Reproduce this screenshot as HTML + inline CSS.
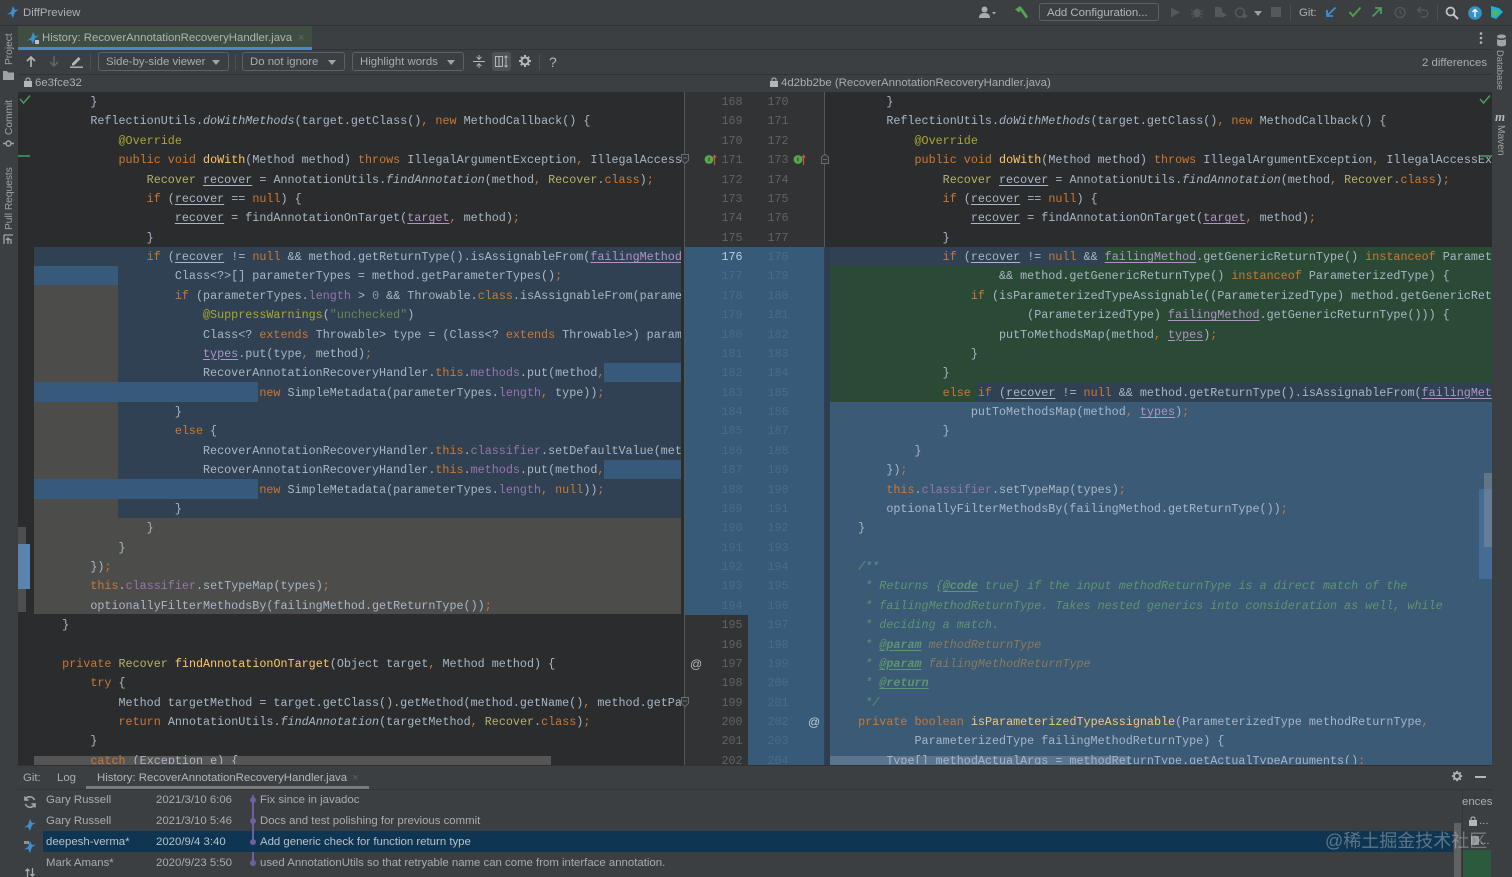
<!DOCTYPE html>
<html><head><meta charset="utf-8"><title>DiffPreview</title>
<style>
html,body{margin:0;padding:0;background:#3c3f41}
#r{position:relative;width:1512px;height:877px;overflow:hidden;background:#3c3f41;font-family:"Liberation Sans","Noto Sans CJK SC",sans-serif;font-size:11.4px;color:#a9adb0;filter:blur(.35px)}
#r div,#r svg,#r span.a{position:absolute}
.t{position:absolute;white-space:pre;line-height:14px}
pre{position:absolute;margin:0;font-family:"Liberation Mono",monospace;font-size:11.74px;line-height:19.38px;color:#a9b7c6;white-space:pre}
.p{overflow:hidden}
i{font-style:italic}
.k{color:#cc7832}.n{color:#b5b36a}.f{color:#ffc66d}.v{color:#9876aa}.u{text-decoration:underline;text-underline-offset:2px}.m{color:#b095c4}
.an{color:#a8a832}.s{color:#6a8759}.d{color:#8a9aa8}.c{color:#5f9570;font-style:italic}.b{text-decoration:underline;font-weight:bold;text-underline-offset:2px}.q{color:#8c7a5c}
.g{position:absolute;font-family:"Liberation Mono",monospace;font-size:11.7px;line-height:19.38px;color:#606366;white-space:pre;text-align:center;width:24px}
.cb{border:1px solid #5e6164;border-radius:3px;height:18px;box-sizing:border-box;line-height:18px;padding-left:7px;color:#a9adb0;white-space:pre}
.ar{width:0;height:0;border-left:4px solid transparent;border-right:4px solid transparent;border-top:5px solid #a0a3a5}
.vt{position:absolute;white-space:pre;transform-origin:0 0;font-size:10.2px;color:#a0a3a5;line-height:12px}
</style></head><body><div id="r">

<!-- editor backgrounds -->
<div style="left:18px;top:92px;width:667px;height:673px;background:#2b2c2d"></div>
<div style="left:825px;top:92px;width:667px;height:673px;background:#2b2c2d"></div>
<div style="left:685px;top:92px;width:140px;height:673px;background:#313335"></div>

<!-- left diff -->
<div style="left:34px;top:247px;width:647px;height:271px;background:#2f4152"></div>
<div style="left:34px;top:266px;width:84px;height:19px;background:#385a7a"></div>
<div style="left:34px;top:285px;width:84px;height:233px;background:#4c4c4a"></div>
<div style="left:34px;top:518px;width:647px;height:96px;background:#4c4c4a"></div>
<div style="left:604px;top:363px;width:77px;height:19px;background:#385a7a"></div>
<div style="left:34px;top:382px;width:224px;height:20px;background:#385a7a"></div>
<div style="left:604px;top:460px;width:77px;height:19px;background:#385a7a"></div>
<div style="left:34px;top:479px;width:224px;height:20px;background:#385a7a"></div>
<div style="left:681px;top:247px;width:4px;height:368px;background:#2b2c2d"></div>

<!-- gutter diff -->
<div style="left:685px;top:247px;width:140px;height:368px;background:#375a79"></div>
<div style="left:748px;top:615px;width:77px;height:150px;background:#375a79"></div>

<!-- right diff -->
<div style="left:825px;top:247px;width:5px;height:518px;background:#2c3e50"></div>
<div style="left:830px;top:247px;width:662px;height:19px;background:#2a4a35"></div>
<div style="left:830px;top:247px;width:274px;height:19px;background:#2f4152"></div>
<div style="left:830px;top:266px;width:662px;height:136px;background:#2a4a35"></div>
<div style="left:977px;top:382px;width:515px;height:20px;background:#2f4152"></div>
<div style="left:830px;top:402px;width:662px;height:363px;background:#3a5a76"></div>

<!-- horizontal scrollbars -->
<div style="left:34px;top:756px;width:517px;height:9px;background:rgba(120,120,118,.55)"></div>
<div style="left:830px;top:756px;width:300px;height:9px;background:rgba(150,165,185,.35)"></div>

<!-- code left -->
<div class="p" style="left:34px;top:92px;width:647px;height:672px"><pre style="left:0;top:1px">        }
        ReflectionUtils.<i>doWithMethods</i>(target.getClass()<span class="k">,</span> <span class="k">new</span> MethodCallback() {
            <span class="an">@Override</span>
            <span class="k">public void</span> <span class="f">doWith</span>(Method method) <span class="k">throws</span> IllegalArgumentException<span class="k">,</span> IllegalAccessException {
                <span class="n">Recover</span> <span class="u">recover</span> = AnnotationUtils.<i>findAnnotation</i>(method<span class="k">,</span> <span class="n">Recover</span>.<span class="k">class</span>)<span class="k">;</span>
                <span class="k">if</span> (<span class="u">recover</span> == <span class="k">null</span>) {
                    <span class="u">recover</span> = findAnnotationOnTarget(<span class="u m">target</span><span class="k">,</span> method)<span class="k">;</span>
                }
                <span class="k">if</span> (<span class="u">recover</span> != <span class="k">null</span> &amp;&amp; method.getReturnType().isAssignableFrom(<span class="u m">failingMethod</span>.getReturnType())) {
                    Class&lt;?&gt;[] parameterTypes = method.getParameterTypes()<span class="k">;</span>
                    <span class="k">if</span> (parameterTypes.<span class="v">length</span> &gt; <span class="d">0</span> &amp;&amp; Throwable.<span class="k">class</span>.isAssignableFrom(parameterTypes[<span class="d">0</span>])) {
                        <span class="an">@SuppressWarnings</span>(<span class="s">"unchecked"</span>)
                        Class&lt;? <span class="k">extends</span> Throwable&gt; type = (Class&lt;? <span class="k">extends</span> Throwable&gt;) parameterTypes[<span class="d">0</span>]<span class="k">;</span>
                        <span class="u m">types</span>.put(type<span class="k">,</span> method)<span class="k">;</span>
                        RecoverAnnotationRecoveryHandler.<span class="k">this</span>.<span class="v">methods</span>.put(method<span class="k">,</span>
                                <span class="k">new</span> SimpleMetadata(parameterTypes.<span class="v">length</span><span class="k">,</span> type))<span class="k">;</span>
                    }
                    <span class="k">else</span> {
                        RecoverAnnotationRecoveryHandler.<span class="k">this</span>.<span class="v">classifier</span>.setDefaultValue(method)<span class="k">;</span>
                        RecoverAnnotationRecoveryHandler.<span class="k">this</span>.<span class="v">methods</span>.put(method<span class="k">,</span>
                                <span class="k">new</span> SimpleMetadata(parameterTypes.<span class="v">length</span><span class="k">,</span> <span class="k">null</span>))<span class="k">;</span>
                    }
                }
            }
        })<span class="k">;</span>
        <span class="k">this</span>.<span class="v">classifier</span>.setTypeMap(types)<span class="k">;</span>
        optionallyFilterMethodsBy(failingMethod.getReturnType())<span class="k">;</span>
    }

    <span class="k">private</span> <span class="n">Recover</span> <span class="f">findAnnotationOnTarget</span>(Object target<span class="k">,</span> Method method) {
        <span class="k">try</span> {
            Method targetMethod = target.getClass().getMethod(method.getName()<span class="k">,</span> method.getParameterTypes())<span class="k">;</span>
            <span class="k">return</span> AnnotationUtils.<i>findAnnotation</i>(targetMethod<span class="k">,</span> <span class="n">Recover</span>.<span class="k">class</span>)<span class="k">;</span>
        }
        <span class="k">catch</span> (Exception e) {</pre></div>

<!-- code right -->
<div class="p" style="left:830px;top:92px;width:662px;height:672px"><pre style="left:0;top:1px">        }
        ReflectionUtils.<i>doWithMethods</i>(target.getClass()<span class="k">,</span> <span class="k">new</span> MethodCallback() {
            <span class="an">@Override</span>
            <span class="k">public void</span> <span class="f">doWith</span>(Method method) <span class="k">throws</span> IllegalArgumentException<span class="k">,</span> IllegalAccessException {
                <span class="n">Recover</span> <span class="u">recover</span> = AnnotationUtils.<i>findAnnotation</i>(method<span class="k">,</span> <span class="n">Recover</span>.<span class="k">class</span>)<span class="k">;</span>
                <span class="k">if</span> (<span class="u">recover</span> == <span class="k">null</span>) {
                    <span class="u">recover</span> = findAnnotationOnTarget(<span class="u m">target</span><span class="k">,</span> method)<span class="k">;</span>
                }
                <span class="k">if</span> (<span class="u">recover</span> != <span class="k">null</span> &amp;&amp; <span class="u m">failingMethod</span>.getGenericReturnType() <span class="k">instanceof</span> ParameterizedType
                        &amp;&amp; method.getGenericReturnType() <span class="k">instanceof</span> ParameterizedType) {
                    <span class="k">if</span> (isParameterizedTypeAssignable((ParameterizedType) method.getGenericReturnType()<span class="k">,</span>
                            (ParameterizedType) <span class="u m">failingMethod</span>.getGenericReturnType())) {
                        putToMethodsMap(method<span class="k">,</span> <span class="u m">types</span>)<span class="k">;</span>
                    }
                }
                <span class="k">else if</span> (<span class="u">recover</span> != <span class="k">null</span> &amp;&amp; method.getReturnType().isAssignableFrom(<span class="u m">failingMethod</span>.getReturnType())) {
                    putToMethodsMap(method<span class="k">,</span> <span class="u m">types</span>)<span class="k">;</span>
                }
            }
        })<span class="k">;</span>
        <span class="k">this</span>.<span class="v">classifier</span>.setTypeMap(types)<span class="k">;</span>
        optionallyFilterMethodsBy(failingMethod.getReturnType())<span class="k">;</span>
    }

    <span class="c">/**</span>
     <span class="c">* Returns {<span class="b">@code</span> true} if the input methodReturnType is a direct match of the</span>
     <span class="c">* failingMethodReturnType. Takes nested generics into consideration as well, while</span>
     <span class="c">* deciding a match.</span>
     <span class="c">* <span class="b">@param</span> <span class="q">methodReturnType</span></span>
     <span class="c">* <span class="b">@param</span> <span class="q">failingMethodReturnType</span></span>
     <span class="c">* <span class="b">@return</span></span>
     <span class="c">*/</span>
    <span class="k">private boolean</span> <span class="f">isParameterizedTypeAssignable</span>(ParameterizedType methodReturnType<span class="k">,</span>
            ParameterizedType failingMethodReturnType) {
        Type[] methodActualArgs = methodReturnType.getActualTypeArguments()<span class="k">;</span></pre></div>

<!-- line numbers -->
<div class="g" style="left:720px;top:93px">168
169
170
171
172
173
174
175
<span style="color:#b4cfe0">176</span>
<span style="color:#4a6b88">177
178
179
180
181
182
183
184
185
186
187
188
189
190
191
192
193
194</span>
195
196
197
198
199
200
201
202</div>
<div class="g" style="left:766px;top:93px">170
171
172
173
174
175
176
177
<span style="color:#4a6b88">178
179
180
181
182
183
184
185
186
187
188
189
190
191
192
193
194
195
196
197
198
199
200
201
202
203
204</span></div>

<!-- gutter separators -->
<div style="left:684px;top:92px;width:1px;height:673px;background:#55585a"></div>
<div style="left:824px;top:92px;width:1px;height:155px;background:#55585a"></div>
<div style="left:824px;top:247px;width:1px;height:518px;background:#2f4152"></div>

<!-- gutter icons -->
<svg style="left:703px;top:153px" width="14" height="13" viewBox="0 0 14 13"><circle cx="6" cy="6.5" r="4.4" fill="#59a84b"/><rect x="5.5" y="4.5" width="1" height="3.8" fill="#2b2b2b"/><path d="M11.500 12V3M9.900 4.600 11.500 2.400l1.600 2.200" stroke="#c75450" stroke-width="1.200" fill="none"/></svg>
<svg style="left:792px;top:153px" width="14" height="13" viewBox="0 0 14 13"><circle cx="6" cy="6.5" r="4.4" fill="#59a84b"/><rect x="5.5" y="4.5" width="1" height="3.8" fill="#2b2b2b"/><path d="M11.500 12V3M9.900 4.600 11.500 2.400l1.600 2.200" stroke="#c75450" stroke-width="1.200" fill="none"/></svg>
<svg style="left:681px;top:154px" width="8" height="10" viewBox="0 0 8 10"><path d="M.5.5h7v6L4 9.5.5 6.500z" fill="#313335" stroke="#6a6d70"/><path d="M2 4h4" stroke="#6a6d70"/></svg>
<svg style="left:821px;top:154px" width="8" height="10" viewBox="0 0 8 10"><path d="M4 .5 7.500 3v6.500h-7V3z" fill="#313335" stroke="#6a6d70"/><path d="M2 5.500h4" stroke="#6a6d70"/></svg>
<svg style="left:681px;top:697px" width="8" height="10" viewBox="0 0 8 10"><path d="M.5.5h7v6L4 9.500.5 6.500z" fill="#313335" stroke="#6a6d70"/><path d="M2 4h4" stroke="#6a6d70"/></svg>
<span class="t" style="left:690px;top:657px;font-size:12px;color:#bcbfc2">@</span>
<span class="t" style="left:808px;top:715px;font-size:12px;color:#c5cdd4">@</span>

<!-- markers -->
<div style="left:18px;top:527px;width:8px;height:85px;background:#4d4e4f"></div>
<div style="left:18px;top:544px;width:12px;height:45px;background:#5a83ad"></div>
<div style="left:18px;top:155px;width:12px;height:1.500px;background:#3f8058"></div>
<div style="left:1480px;top:155px;width:12px;height:1.500px;background:#3f8058"></div>
<div style="left:1479px;top:489px;width:13px;height:90px;background:#446c97"></div>
<div style="left:1484px;top:473px;width:8px;height:74px;background:rgba(130,140,150,.55)"></div>
<svg style="left:19px;top:94px" width="12" height="11" viewBox="0 0 12 11"><path d="M1 5l3.500 4L11 1.500" fill="none" stroke="#4f9a62" stroke-width="1.500"/></svg>
<svg style="left:1479px;top:94px" width="12" height="11" viewBox="0 0 12 11"><path d="M1 5l3.500 4L11 1.500" fill="none" stroke="#4f9a62" stroke-width="1.500"/></svg>

<!-- title bar -->
<div style="left:0;top:0;width:1512px;height:25px;background:#3c3f41;border-bottom:1px solid #323232"></div>
<svg style="left:6px;top:5px" width="14" height="14" viewBox="0 0 14 14"><path d="M7 1 9 5l4-.5L8.500 7.500 5 7zM7 13 5 9l-4 .5L5.500 6.500 9 7z" fill="#3d8fd0"/></svg>
<span class="t" style="left:23px;top:6px;color:#aeb1b3">DiffPreview</span>
<svg style="left:978px;top:6px" width="18" height="13" viewBox="0 0 18 13"><circle cx="6.500" cy="3.500" r="3" fill="#a9acae"/><path d="M1 12c0-4 2.500-5 5.500-5s5.500 1 5.500 5z" fill="#a9acae"/><path d="M14 6h4l-2 2.500z" fill="#a9acae"/></svg>
<svg style="left:1014px;top:5px" width="15" height="15" viewBox="0 0 15 15"><path d="M1 4.500 6 1l2.500 2.500L5 7.500zM6 5l2-2 6 8.500-2 2z" fill="#59a05a"/></svg>
<div class="cb" style="left:1039px;top:3px;width:120px;color:#b4b7b9;font-size:11.4px">Add Configuration...</div>
<svg style="left:1168px;top:6px" width="14" height="13" viewBox="0 0 14 13"><path d="M3 1.500 12 6.500 3 11.500z" fill="#555859"/></svg>
<svg style="left:1190px;top:6px" width="14" height="13" viewBox="0 0 14 13"><ellipse cx="7" cy="7" rx="3.500" ry="4.500" fill="#555859"/><path d="M1 4l3 2M13 4l-3 2M1 8h3M13 8h-3M1.500 12l3-2M12.500 12l-3-2" stroke="#555859"/></svg>
<svg style="left:1213px;top:6px" width="15" height="13" viewBox="0 0 15 13"><path d="M2 1h5l2 2v8H2z" fill="#555859"/><path d="M9 6l5 3-5 3z" fill="#555859"/></svg>
<svg style="left:1234px;top:6px" width="15" height="13" viewBox="0 0 15 13"><circle cx="6" cy="6.500" r="4.500" fill="none" stroke="#555859" stroke-width="1.500"/><path d="M9 7l5 3-5 3z" fill="#555859"/></svg>
<div class="ar" style="left:1254px;top:11px;border-top-color:#9c9fa1"></div>
<div style="left:1271px;top:7px;width:10px;height:10px;background:#555859"></div>
<div style="left:1290px;top:4px;width:1px;height:17px;background:#4d5052"></div>
<span class="t" style="left:1299px;top:6px;color:#aeb1b3">Git:</span>
<svg style="left:1325px;top:6px" width="12" height="12" viewBox="0 0 12 12"><path d="M10.500 1.500 2 10M2 4v6h6" fill="none" stroke="#3d8fd0" stroke-width="1.800"/></svg>
<svg style="left:1348px;top:6px" width="14" height="12" viewBox="0 0 14 12"><path d="M1.500 6l3.500 4 7.500-8.500" fill="none" stroke="#4f9a4d" stroke-width="2"/></svg>
<svg style="left:1371px;top:6px" width="12" height="12" viewBox="0 0 12 12"><path d="M1.500 10.500 10 2M4 2h6v6" fill="none" stroke="#4f9a62" stroke-width="1.800"/></svg>
<svg style="left:1393px;top:6px" width="14" height="13" viewBox="0 0 14 13"><circle cx="7" cy="6.500" r="5" fill="none" stroke="#57595b" stroke-width="1.200"/><path d="M7 3.500v3l2 1.500" fill="none" stroke="#57595b"/></svg>
<svg style="left:1416px;top:6px" width="14" height="13" viewBox="0 0 14 13"><path d="M5 1 1.500 4 5 7M2 4h6c5 0 5 7 0 7H5" fill="none" stroke="#57595b" stroke-width="1.200"/></svg>
<div style="left:1437px;top:4px;width:1px;height:17px;background:#4d5052"></div>
<svg style="left:1445px;top:6px" width="14" height="14" viewBox="0 0 14 14"><circle cx="5.500" cy="5.500" r="4" fill="none" stroke="#c4c7c9" stroke-width="1.700"/><path d="M8.500 8.500 13 13" stroke="#c4c7c9" stroke-width="2"/></svg>
<svg style="left:1468px;top:6px" width="14" height="14" viewBox="0 0 14 14"><circle cx="7" cy="7" r="6.800" fill="#3592c4"/><path d="M7 11V4M4.500 6 7 3.500 9.500 6" stroke="#fff" stroke-width="1.300" fill="none"/></svg>
<svg style="left:1490px;top:5px" width="14" height="15" viewBox="0 0 14 15"><path d="M1 1l8 2 4 4-7 7-5-2z" fill="#22b0c8"/><path d="M3 5l4 1 2 1.500-4 4-2-1z" fill="#57b84e"/></svg>

<!-- tab row -->
<div style="left:18px;top:26px;width:1474px;height:24px;background:#3c3f41;border-bottom:1px solid #323232;box-sizing:border-box"></div>
<div style="left:18px;top:26px;width:294px;height:21px;background:#3f4d43"></div>
<div style="left:18px;top:47px;width:294px;height:3px;background:#4a88c7"></div>
<svg style="left:26px;top:31px" width="14" height="14" viewBox="0 0 14 14"><path d="M7 1 9 5l4-.5L8.500 7.500 5 7zM7 13 5 9l-4 .500L5.500 6.500 9 7z" fill="#3d8fd0"/><rect x="9" y="9" width="4" height="4" fill="#bfc2c4"/></svg>
<span class="t" style="left:42px;top:31px;color:#aeb4b0">History: RecoverAnnotationRecoveryHandler.java</span>
<span class="t" style="left:298px;top:31px;color:#5f6b62">×</span>
<svg style="left:1479px;top:31px" width="4" height="14" viewBox="0 0 4 14"><circle cx="2" cy="2.500" r="1.300" fill="#b4b7b9"/><circle cx="2" cy="7" r="1.300" fill="#b4b7b9"/><circle cx="2" cy="11.500" r="1.300" fill="#b4b7b9"/></svg>

<!-- toolbar -->
<div style="left:18px;top:50px;width:1474px;height:25px;background:#3c3f41;border-bottom:1px solid #323232;box-sizing:border-box"></div>
<svg style="left:25px;top:55px" width="12" height="13" viewBox="0 0 12 13"><path d="M6 12V2M2 6l4-4 4 4" fill="none" stroke="#b4b7b9" stroke-width="1.600"/></svg>
<svg style="left:48px;top:55px" width="12" height="13" viewBox="0 0 12 13"><path d="M6 1v10M2 7l4 4 4-4" fill="none" stroke="#606366" stroke-width="1.600"/></svg>
<svg style="left:70px;top:55px" width="13" height="13" viewBox="0 0 13 13"><path d="M2 8.500 8.500 2l2 2L4 10.500H2z" fill="#b4b7b9"/><rect x="0" y="11.500" width="13" height="1.400" fill="#b4b7b9"/></svg>
<div style="left:90px;top:54px;width:1px;height:16px;background:#4d5052"></div>
<div class="cb" style="left:98px;top:52px;width:131px;height:19px">Side-by-side viewer</div>
<div class="ar" style="left:212px;top:60px"></div>
<div style="left:235px;top:54px;width:1px;height:16px;background:#4d5052"></div>
<div class="cb" style="left:242px;top:52px;width:103px;height:19px">Do not ignore</div>
<div class="ar" style="left:328px;top:60px"></div>
<div class="cb" style="left:352px;top:52px;width:112px;height:19px">Highlight words</div>
<div class="ar" style="left:447px;top:60px"></div>
<svg style="left:473px;top:55px" width="12" height="13" viewBox="0 0 12 13"><path d="M0 6.500h12M6 0v3.500M3.500 1.800 6 4.300l2.500-2.500M6 13V9.500M3.500 11.200 6 8.700l2.500 2.500" stroke="#b4b7b9" fill="none"/></svg>
<div style="left:492px;top:52px;width:19px;height:19px;background:#4e5254;border-radius:3px"></div>
<svg style="left:495px;top:55px" width="13" height="13" viewBox="0 0 13 13"><rect x=".5" y="1.500" width="7" height="10" fill="none" stroke="#b4b7b9"/><path d="M4 1.500v10M11 1v11M9.500 2.500 11 1l1.500 1.500M9.500 10.500 11 12l1.500-1.500" stroke="#b4b7b9" fill="none"/></svg>
<svg style="left:518px;top:54px" width="15" height="15" viewBox="0 0 15 15"><circle cx="7" cy="7" r="3.500" fill="none" stroke="#b4b7b9" stroke-width="2"/><path d="M7 1v2M7 11v2M1 7h2M11 7h2M2.800 2.800l1.400 1.400M9.800 9.800l1.400 1.400M2.800 11.200l1.400-1.400M9.800 4.200l1.400-1.400" stroke="#b4b7b9" stroke-width="2"/></svg>
<div style="left:539px;top:54px;width:1px;height:16px;background:#4d5052"></div>
<span class="t" style="left:549px;top:55px;font-size:14px;color:#b4b7b9">?</span>
<span class="t" style="left:1422px;top:55.500px;color:#a9adb0">2 differences</span>

<!-- header row -->
<div style="left:18px;top:75px;width:1474px;height:17px;background:#3c3f41"></div>
<svg style="left:24px;top:77px" width="8" height="10" viewBox="0 0 8 10"><rect x="0" y="4" width="8" height="6" fill="#b4b7b9"/><path d="M2 4V2.500C2 .5 6 .5 6 2.500V4" fill="none" stroke="#b4b7b9"/></svg>
<span class="t" style="left:35px;top:76px;color:#a9adb0">6e3fce32</span>
<svg style="left:770px;top:77px" width="8" height="10" viewBox="0 0 8 10"><rect x="0" y="4" width="8" height="6" fill="#b4b7b9"/><path d="M2 4V2.500C2 .5 6 .5 6 2.500V4" fill="none" stroke="#b4b7b9"/></svg>
<span class="t" style="left:781px;top:76px;color:#a9adb0">4d2bb2be (RecoverAnnotationRecoveryHandler.java)</span>

<!-- left strip -->
<div style="left:0;top:26px;width:18px;height:851px;background:#3c3f41"></div>
<span class="vt" style="left:4px;top:65px;transform:rotate(-90deg)">Project</span>
<svg style="left:3px;top:70px" width="11" height="10" viewBox="0 0 11 10"><path d="M0 1h4l1 1.500h6V10H0z" fill="#a0a3a5"/></svg>
<span class="vt" style="left:4px;top:135px;transform:rotate(-90deg)">Commit</span>
<svg style="left:3px;top:138px" width="11" height="11" viewBox="0 0 11 11"><circle cx="5.500" cy="5.500" r="2.500" fill="none" stroke="#a0a3a5" stroke-width="1.500"/><path d="M0 5.500h3M8 5.500h3" stroke="#a0a3a5" stroke-width="1.500"/></svg>
<span class="vt" style="left:4px;top:230px;transform:rotate(-90deg)">Pull Requests</span>
<svg style="left:3px;top:234px" width="11" height="11" viewBox="0 0 11 11"><path d="M1 1v9M1 1h9M5 10V4M3 6l2-2 2 2M8 10V5" stroke="#a0a3a5" stroke-width="1.300" fill="none"/></svg>

<!-- right strip -->
<div style="left:1492px;top:26px;width:20px;height:851px;background:#3c3f41"></div>
<svg style="left:1496px;top:34px" width="11" height="13" viewBox="0 0 11 13"><ellipse cx="5.500" cy="2.500" rx="4.500" ry="2" fill="#a0a3a5"/><path d="M1 4.500v6c0 2.500 9 2.500 9 0v-6c0 2-9 2-9 0z" fill="#a0a3a5"/></svg>
<span class="vt" style="left:1506px;top:50px;transform:rotate(90deg);font-size:9.4px">Database</span>
<span class="t" style="left:1495px;top:109px;font:italic bold 13px 'Liberation Serif',serif;color:#b4b7b9">m</span>
<span class="vt" style="left:1506px;top:125px;transform:rotate(90deg)">Maven</span>

<!-- bottom panel -->
<div style="left:18px;top:765px;width:1474px;height:112px;background:#3c3f41;border-top:1px solid #323232;box-sizing:border-box"></div>
<span class="t" style="left:23px;top:771px">Git:</span>
<span class="t" style="left:57px;top:771px">Log</span>
<span class="t" style="left:97px;top:771px;color:#b4b7b9">History: RecoverAnnotationRecoveryHandler.java</span>
<span class="t" style="left:352px;top:771px;color:#5f6265">×</span>
<div style="left:86px;top:786px;width:283px;height:3px;background:#787a7c"></div>
<div style="left:18px;top:789px;width:1474px;height:1px;background:#333537"></div>
<svg style="left:1451px;top:770px" width="13" height="13" viewBox="0 0 15 15"><circle cx="7" cy="7" r="3.500" fill="none" stroke="#b4b7b9" stroke-width="2"/><path d="M7 1v2M7 11v2M1 7h2M11 7h2M2.800 2.800l1.400 1.400M9.800 9.800l1.400 1.400M2.800 11.200l1.400-1.400M9.800 4.200l1.400-1.400" stroke="#b4b7b9" stroke-width="2"/></svg>
<div style="left:1475px;top:776px;width:11px;height:1.500px;background:#b4b7b9"></div>

<div style="left:43px;top:831px;width:1410px;height:21px;background:#0e3552"></div>
<div style="left:1454px;top:823px;width:7px;height:54px;background:#5f6163"></div>
<div style="left:1462px;top:789px;width:1px;height:88px;background:#333537"></div>
<div style="left:1463px;top:850px;width:28px;height:27px;background:#2c5a3c"></div>
<span class="t" style="left:1462px;top:795px;color:#a9adb0">ences</span>
<svg style="left:1469px;top:816px" width="8" height="10" viewBox="0 0 8 10"><rect x="0" y="4" width="8" height="6" fill="#b4b7b9"/><path d="M2 4V2.500C2 .5 6 .5 6 2.500V4" fill="none" stroke="#b4b7b9"/></svg>
<span class="t" style="left:1479px;top:814px;color:#a9adb0">...</span>
<svg style="left:1470px;top:835px" width="10" height="11" viewBox="0 0 10 11"><path d="M1 1h8v9H1z" fill="#8f9294"/></svg>
<span class="t" style="left:1480px;top:834px;color:#a9adb0">...</span>

<svg style="left:23px;top:795px" width="14" height="14" viewBox="0 0 14 14"><path d="M11.500 5A5 5 0 0 0 3 3.500L2 5M2.500 9A5 5 0 0 0 11 10.500L12 9M2 1.500V5h3.500M12 12.500V9H8.500" fill="none" stroke="#a9acae" stroke-width="1.500"/></svg>
<svg style="left:23px;top:818px" width="14" height="14" viewBox="0 0 14 14"><path d="M7 1 9 5l4-.5L8.500 7.500 5 7zM7 13 5 9l-4 .500L5.500 6.500 9 7z" fill="#3d8fd0"/></svg>
<svg style="left:23px;top:840px" width="14" height="14" viewBox="0 0 14 14"><path d="M7 1 9 5l4-.5L8.500 7.500 5 7zM7 13 5 9l-4 .500L5.500 6.500 9 7z" fill="#3d8fd0"/><rect x="1" y="1" width="5" height="3" fill="#8f9294"/></svg>
<svg style="left:24px;top:868px" width="12" height="9" viewBox="0 0 12 9"><path d="M3.500 9V1M1.500 3l2-2 2 2M8.500 0v8M6.500 6l2 2 2-2" fill="none" stroke="#a9acae" stroke-width="1.300"/></svg>

<span class="t" style="left:46px;top:793px">Gary Russell</span>
<span class="t" style="left:156px;top:793px">2021/3/10 6:06</span>
<span class="t" style="left:260px;top:793px">Fix since in javadoc</span>
<span class="t" style="left:46px;top:814px">Gary Russell</span>
<span class="t" style="left:156px;top:814px">2021/3/10 5:46</span>
<span class="t" style="left:260px;top:814px">Docs and test polishing for previous commit</span>
<span class="t" style="left:46px;top:835px;color:#b8c2ca">deepesh-verma*</span>
<span class="t" style="left:156px;top:835px;color:#b8c2ca">2020/9/4 3:40</span>
<span class="t" style="left:260px;top:835px;color:#b8c2ca">Add generic check for function return type</span>
<span class="t" style="left:46px;top:856px">Mark Amans*</span>
<span class="t" style="left:156px;top:856px">2020/9/23 5:50</span>
<span class="t" style="left:260px;top:856px">used AnnotationUtils so that retryable name can come from interface annotation.</span>
<div style="left:252px;top:795px;width:2px;height:15px;background:#6e5f9e"></div>
<div style="left:252px;top:810px;width:2px;height:32px;background:#6e5f9e"></div>
<div style="left:252px;top:852px;width:2px;height:14px;background:#6e5f9e"></div>
<div style="left:250px;top:797px;width:6px;height:6px;border-radius:3px;background:#6e5f9e"></div>
<div style="left:250px;top:818px;width:6px;height:6px;border-radius:3px;background:#6e5f9e"></div>
<div style="left:250px;top:839px;width:6px;height:6px;border-radius:3px;background:#6e5f9e"></div>
<div style="left:250px;top:860px;width:6px;height:6px;border-radius:3px;background:#6e5f9e"></div>

<span class="t" style="left:1325px;top:831px;font-size:18px;line-height:20px;color:rgba(200,205,210,.42)">@稀土掘金技术社区</span>
</div></body></html>
